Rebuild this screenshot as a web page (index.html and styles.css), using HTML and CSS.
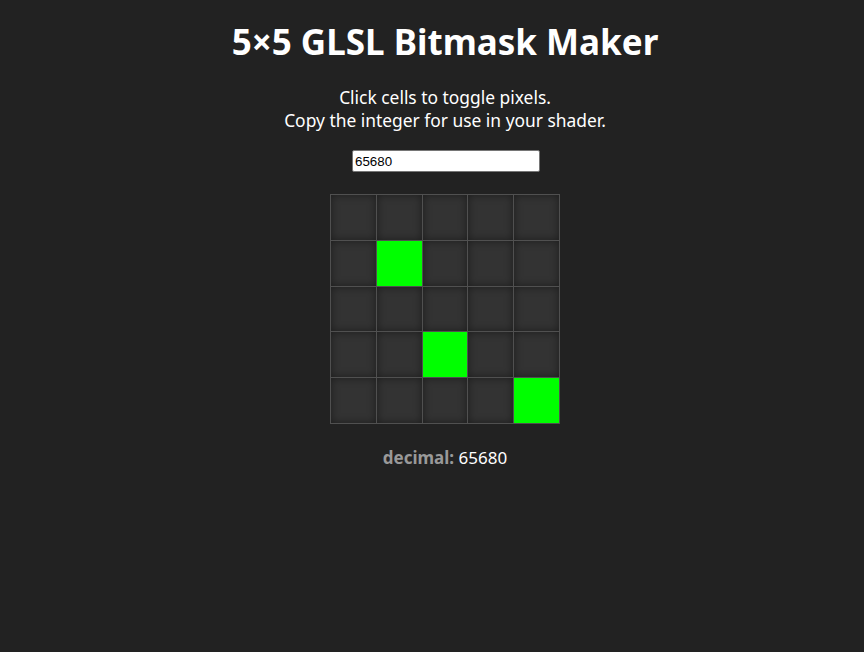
FILE: index.html
```html
<!DOCTYPE html>
<html lang="en">
<head>
<meta charset="utf-8">
<title>5×5 GLSL Bitmask Maker</title>
<link rel="stylesheet" href="styles.css">
</head>
<body>
<main class="app">
  <h1 class="title">5×5 GLSL Bitmask Maker</h1>
  <p class="intro">Click cells to toggle pixels.<br>Copy the integer for use in your shader.</p>
  <input class="value" type="text" value="65680">
  <div class="grid">
    <div class="cell"></div><div class="cell"></div><div class="cell"></div><div class="cell"></div><div class="cell"></div>
    <div class="cell"></div><div class="cell on"></div><div class="cell"></div><div class="cell"></div><div class="cell"></div>
    <div class="cell"></div><div class="cell"></div><div class="cell"></div><div class="cell"></div><div class="cell"></div>
    <div class="cell"></div><div class="cell"></div><div class="cell on"></div><div class="cell"></div><div class="cell"></div>
    <div class="cell"></div><div class="cell"></div><div class="cell"></div><div class="cell"></div><div class="cell on"></div>
  </div>
  <p class="result"><span class="label">decimal:</span> 65680</p>
</main>
</body>
</html>
```
FILE: styles.css
```css
html, body {
  margin: 0;
  padding: 0;
  background: #222222;
  height: 100%;
}
body {
  color: #ffffff;
  font-family: "Noto Sans", "Open Sans", sans-serif;
}
.app {
  display: flex;
  flex-direction: column;
  align-items: center;
  padding-left: 26px;
  padding-top: 18px;
}
.title {
  margin: 0;
  font-size: 35px;
  font-weight: 700;
  line-height: 48px;
}
.intro {
  margin: 20px 0 0;
  font-size: 17.4px;
  line-height: 23px;
  text-align: center;
}
.value {
  margin-top: 18px;
  margin-left: 2px;
  box-sizing: border-box;
  width: 188px;
  height: 22px;
  padding: 1px 2px;
  border: 1px solid #767676;
  border-radius: 2px;
  font-family: "Liberation Sans", Arial, sans-serif;
  font-size: 13.33px;
  color: #000;
  background: #fff;
}
.grid {
  margin-top: 22px;
  display: grid;
  grid-template-columns: 45px 45px 44px 45px 45px;
  grid-template-rows: 45px 45px 44px 45px 45px;
  gap: 1px;
  padding: 1px;
  background: #505050;
}
.cell {
  background: #333333;
  box-shadow: inset 0 0 8px rgba(0, 0, 0, 0.45);
}
.cell.on {
  background: #00ff00;
  box-shadow: none;
}
.result {
  margin: 22px 0 0;
  font-size: 17px;
  line-height: 24px;
}
.label {
  color: #999999;
  font-weight: 700;
}
```
